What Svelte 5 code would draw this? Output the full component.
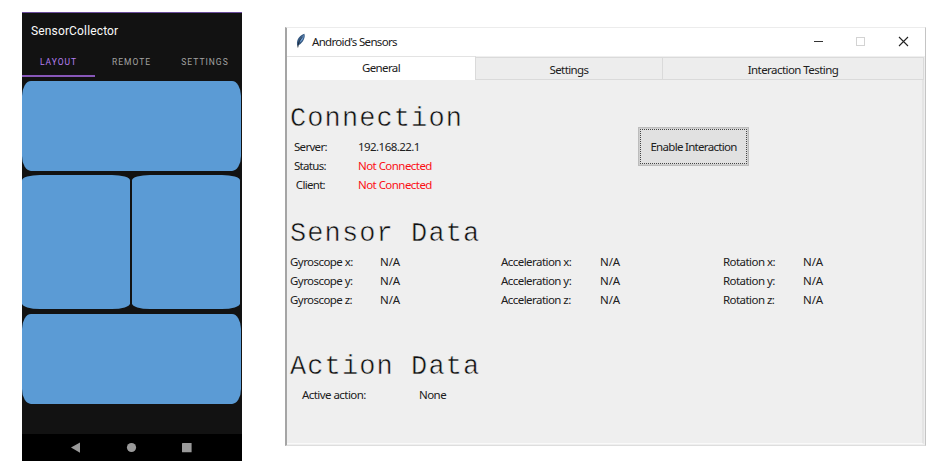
<script>
  const info = [
    ['Server:', '192.168.22.1', false],
    ['Status:', 'Not Connected', true],
    ['Client:', 'Not Connected', true]
  ];
  const sensors = ['Gyroscope', 'Acceleration', 'Rotation'];
  const axes = ['x', 'y', 'z'];
</script>

<main>
  <section class="phone">
    <header>SensorCollector</header>
    <nav class="ptabs">
      <span class="on">LAYOUT</span><span>REMOTE</span><span>SETTINGS</span>
    </nav>
    <div class="pads">
      <div class="pad"></div>
      <div class="pair"><div class="half"></div><div class="half"></div></div>
      <div class="pad"></div>
    </div>
    <footer>
      <svg width="220" height="27" viewBox="0 0 220 27" fill="#9a9a9a">
        <path d="M49 13.5 L58 8.5 V18.8 Z" />
        <circle cx="109.5" cy="13.5" r="4.6" />
        <rect x="160" y="9" width="9.6" height="9.3" rx=".5" />
      </svg>
    </footer>
  </section>

  <section class="window">
    <div class="titlebar">
      <svg class="feather" width="12" height="16" viewBox="0 0 12 16">
        <path d="M2.4 13 C1 8.5 3 3 9.3 .8 C10.8 4 8.3 9.5 4 12 Z" fill="#34577f" />
        <path d="M4.4 9.6 C4.4 6.6 6 3.6 8.8 2 C9 5.2 7.4 8 4.4 9.6Z" fill="#6d9bd0" />
        <path d="M2.8 14.4 C3 10.5 4.6 7 7.6 3.6" fill="none" stroke="#1b2733" stroke-width=".9" />
      </svg>
      <span class="t">Android's Sensors</span>
      <svg class="controls" width="100" height="14" viewBox="0 0 100 14" fill="none">
        <path d="M3 6.5H12" stroke="#333" />
        <rect x="45.5" y="2.5" width="8" height="8" stroke="#d3d3d3" />
        <path d="M88 2 L97 11 M97 2 L88 11" stroke="#222" stroke-width="1.1" />
      </svg>
    </div>
    <div class="tabs">
      <div class="tab active"><span>General</span></div>
      <div class="tab settings"><span>Settings</span></div>
      <div class="tab last"><span>Interaction Testing</span></div>
    </div>
    <div class="body">
      <div class="connection">
        <div class="left">
          <h1>Connection</h1>
          {#each info as [k, v, bad]}
            <div class="row"><span class="key">{k}</span><span class:bad>{v}</span></div>
          {/each}
        </div>
        <button><span>Enable Interaction</span></button>
      </div>
      <h1 class="h-sensor">Sensor Data</h1>
      {#each axes as a}
        <div class="row grid">
          {#each sensors as s}
            <span>{s} {a}:</span><span class="na">N/A</span>
          {/each}
        </div>
      {/each}
      <h1 class="h-action">Action Data</h1>
      <div class="row action"><span>Active action:</span><span>None</span></div>
    </div>
  </section>
</main>

<style>
  :global(body) { background: #fff; }
  main {
    box-sizing: border-box; width: 935px; height: 472px; padding: 12px 0 0 22px;
    display: flex; align-items: flex-start; gap: 43px; overflow: hidden;
    font-family: "Noto Sans", "Open Sans", sans-serif;
  }
  .phone {
    box-sizing: border-box; width: 220px; height: 449px; background: #121212;
    border-top: 1px solid #6a4c9c; display: flex; flex-direction: column;
    font-family: Roboto, sans-serif; flex: none;
  }
  header { height: 36px; line-height: 36px; padding-left: 9px; color: #fafafa; font-size: 12px; font-weight: 400; letter-spacing: .15px; }
  .ptabs { height: 28px; display: flex; }
  .ptabs span {
    box-sizing: border-box; width: 73px; height: 28px; line-height: 26px; text-align: center;
    color: #a2a2a2; font-size: 8.5px; font-weight: 400; letter-spacing: 1px; white-space: nowrap;
  }
  .ptabs span:nth-child(3) { width: 74px; }
  .ptabs .on { color: #b57ff0; border-bottom: 2px solid #8757b8; }
  .pads { padding: 3.5px 1px 0 0; display: flex; flex-direction: column; gap: 4.5px; flex: 1; }
  .pad { height: 90px; background: #5b9bd5; border-radius: 9px / 15px; }
  .pair { height: 134px; display: flex; gap: 2px; padding-right: 1px; }
  .half { flex: 1; background: #5b9bd5; border-radius: 18px / 5.5px; }
  .half:first-child { flex: none; width: 107.5px; }
  footer { height: 27px; background: #000; }
  footer svg { display: block; }

  .window {
    box-sizing: border-box; width: 641px; height: 419px; margin-top: 15px; background: #efefef;
    border: 1px solid #c4c4c4; border-top-color: #ececec; border-bottom-color: #dedede; border-left: 2px solid #a5a5a5;
    font-size: 11.5px; color: #202020; flex: none; letter-spacing: -.55px;
  }
  .titlebar { height: 28px; background: #fff; display: flex; align-items: center; padding-left: 8px; }
  .feather { position: relative; top: -1px; }
  .titlebar .t { margin-left: 5px; flex: 1; position: relative; top: -1px; letter-spacing: -.68px; }
  .controls { margin-right: 14px; }
  .tabs { height: 24px; display: flex; align-items: flex-end; padding-right: 1px; }
  .tab {
    box-sizing: border-box; height: 23px; border: 1px solid #dadada; border-left: 0;
    display: flex; align-items: center; justify-content: center; background: #ededed;
  }
  .tab span { position: relative; top: 1px; }
  .active { width: 189px; height: 24px; background: #fff; border-bottom: 0; border-top-color: #e3e3e3; }
  .active span { top: -1px; }
  .active, .settings { letter-spacing: -.6px; }
  .settings { width: 187px; }
  .last { flex: 1; }
  .body { box-sizing: border-box; height: 364px; padding: 21px 0 0 3px; border-right: 2px solid #e4e4e4; border-bottom: 1px solid #fafafa; margin-right: 1px; }
  .connection { display: flex; }
  .left { width: 348px; }
  h1 {
    margin: 0; height: 36px; font: 400 27px/36px "Courier New", "Liberation Mono", monospace;
    letter-spacing: 1.1px; color: #101010; white-space: pre; -webkit-text-stroke: .5px #efefef;
  }
  .row { display: flex; height: 19px; line-height: 19px; white-space: nowrap; }
  .left .row { padding-left: 4px; }
  .key { width: 31px; margin-right: 33px; text-align: right; letter-spacing: -.7px; }
  .bad { color: #fb1015; }
  button {
    box-sizing: border-box; width: 111px; height: 39px; margin-top: 26px; padding: 1px;
    border: 1px solid #bcbcbc; background: #d0d0d0; color: #202020; font: inherit; letter-spacing: -.7px;
  }
  button span {
    box-sizing: border-box; width: 100%; height: 100%; display: flex; align-items: center; justify-content: center;
    background: #e1e1e1; border: 1px dotted #444; white-space: nowrap;
  }
  .h-sensor { margin-top: 22px; }
  .grid { display: grid; grid-template-columns: 90px 121px 99px 123px 80px 60px; }
  .na { letter-spacing: -.1px; }
  .h-action { margin-top: 40px; }
  .action { padding-left: 12px; }
  .action span:first-child { width: 117px; }
</style>
